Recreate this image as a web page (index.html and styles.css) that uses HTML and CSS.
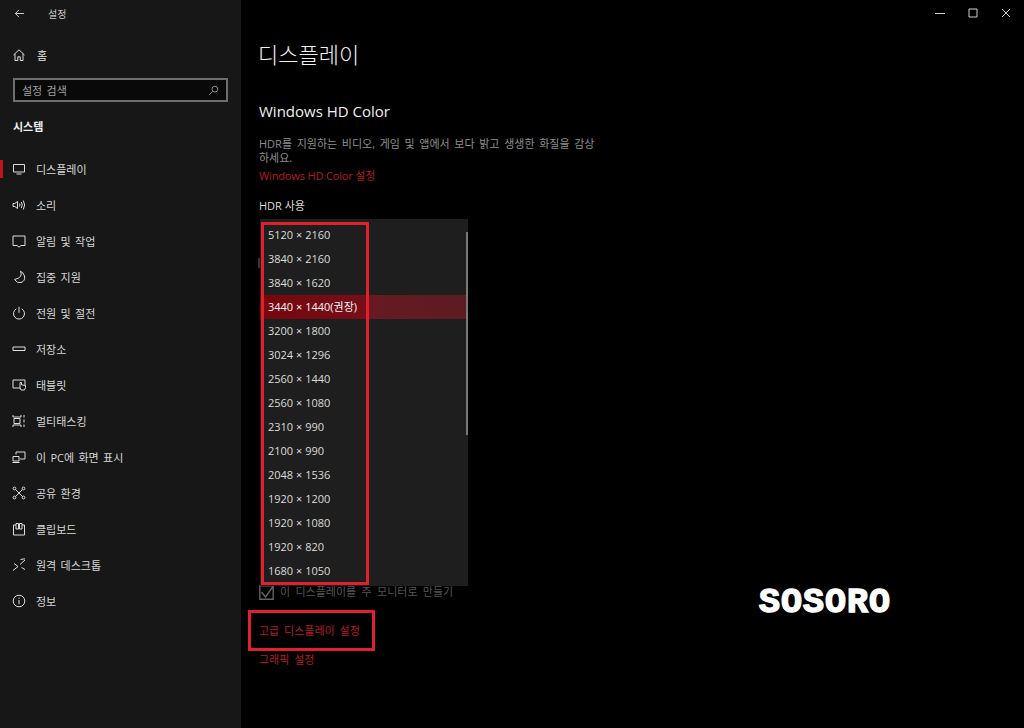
FILE: index.html
```html
<!DOCTYPE html>
<html lang="ko">
<head>
<meta charset="utf-8">
<title>설정</title>
<link rel="stylesheet" href="styles.css">
</head>
<body>
<div class="app">
  <aside class="sidebar">
    <div class="appbar">
      <svg class="back" viewBox="0 0 12 12"><path d="M11 6H1.500M5.500 2 1.500 6l4 4"/></svg>
      <span class="apptitle">설정</span>
    </div>
    <div class="home">
      <svg class="ico" viewBox="0 0 14 14"><path d="M1.500 7 7 1.800 12.500 7M3 5.800V12.500h2.800V8.800h2.400v3.700H11V5.800"/></svg>
      <span>홈</span>
    </div>
    <div class="search"><span>설정 검색</span>
      <svg class="searchico" viewBox="0 0 12 12"><circle cx="7.500" cy="4.500" r="3.200"/><path d="M5.200 6.800 1.200 10.800"/></svg>
    </div>
    <div class="section">시스템</div>
    <nav class="nav">
      <div class="item active"><svg class="ico" viewBox="0 0 14 14"><path d="M1.500 2.500h11v7.500h-11zM4.500 12h5"/></svg><span>디스플레이</span></div>
      <div class="item"><svg class="ico" viewBox="0 0 14 14"><path d="M1 5.500h1.800L5.500 3.500v7L2.800 8.500H1zM7.500 5.500q1 1.500 0 3M9.300 4q1.800 3 0 6M11.300 2.500q2.700 4.500 0 9"/></svg><span>소리</span></div>
      <div class="item"><svg class="ico" viewBox="0 0 14 14"><path d="M1 2h12v9.500H9L7 13.200 5 11.500H1z"/></svg><span>알림 및 작업</span></div>
      <div class="item"><svg class="ico" viewBox="0 0 14 14"><path d="M8.500 1.200Q11.500 7.500 2.500 9.500 5 13.500 9 12.500 13.500 11 12.500 6 11.500 2.500 8.500 1.200z"/></svg><span>집중 지원</span></div>
      <div class="item"><svg class="ico" viewBox="0 0 14 14"><path d="M4.300 2.800a5.500 5.500 0 1 0 5.400 0M7 .8v6"/></svg><span>전원 및 절전</span></div>
      <div class="item"><svg class="ico" viewBox="0 0 14 14"><path d="M1 5h12v3.500H1z"/></svg><span>저장소</span></div>
      <div class="item"><svg class="ico" viewBox="0 0 14 14"><path d="M8 10H1V2h12v5M8 4.500v5l1 2.500h3.500l1-2.500V7.500L9.500 6.800V4.500z"/></svg><span>태블릿</span></div>
      <div class="item"><svg class="ico" viewBox="0 0 14 14"><path d="M1 1v2h8V1M1 13v-2h8v2M2 4.500h6v5H2zM12 1v2.500M12 5.500v3M12 10.500v2.500"/></svg><span>멀티태스킹</span></div>
      <div class="item"><svg class="ico" viewBox="0 0 14 14"><path d="M4 4.500V2h9v7H8M1 6.500h6V11H1zM.5 12.500h7"/></svg><span>이 PC에 화면 표시</span></div>
      <div class="item"><svg class="ico" viewBox="0 0 14 14"><circle cx="2.500" cy="2.500" r="1.400"/><circle cx="11.500" cy="2.500" r="1.400"/><circle cx="2.500" cy="11.500" r="1.400"/><circle cx="11.500" cy="11.500" r="1.400"/><path d="M3.500 3.500l7 7M10.500 3.500l-7 7"/></svg><span>공유 환경</span></div>
      <div class="item"><svg class="ico" viewBox="0 0 14 14"><path d="M4 3H1.500v10h11V3H10M4 1.500h2.500V7H4zM7.500 1.500H10V7H7.500z"/></svg><span>클립보드</span></div>
      <div class="item"><svg class="ico" viewBox="0 0 14 14"><path d="M1 12.500 6 8.500M6 8.500 2 5.500M8 6.500l5-4.500M8.500 1.500 13 .8M9.500 9.500 13 11.500"/></svg><span>원격 데스크톱</span></div>
      <div class="item"><svg class="ico" viewBox="0 0 14 14"><circle cx="7" cy="7" r="5.800"/><path d="M7 6v4.200M7 3.600v1.200"/></svg><span>정보</span></div>
    </nav>
  </aside>
  <main class="main">
    <div class="winbar">
      <svg class="win" viewBox="0 0 10 10"><path d="M0 5.500h10"/></svg>
      <svg class="win" viewBox="0 0 10 10"><path d="M1 1h8v8H1z"/></svg>
      <svg class="win" viewBox="0 0 10 10"><path d="M1 1l8 8M9 1 1 9"/></svg>
    </div>
    <div class="content">
      <h1 class="title">디스플레이</h1>
      <h2 class="subtitle">Windows HD Color</h2>
      <p class="desc">HDR를 지원하는 비디오, 게임 및 앱에서 보다 밝고 생생한 화질을 감상<br>하세요.</p>
      <a class="link hdlink">Windows HD Color 설정</a>
      <div class="label">HDR 사용</div>
      <div class="dropdown">
        <ul class="options">
          <li>5120 × 2160</li>
          <li>3840 × 2160</li>
          <li>3840 × 1620</li>
          <li class="selected">3440 × 1440(권장)</li>
          <li>3200 × 1800</li>
          <li>3024 × 1296</li>
          <li>2560 × 1440</li>
          <li>2560 × 1080</li>
          <li>2310 × 990</li>
          <li>2100 × 990</li>
          <li>2048 × 1536</li>
          <li>1920 × 1200</li>
          <li>1920 × 1080</li>
          <li>1920 × 820</li>
          <li>1680 × 1050</li>
        </ul>
        <div class="scrollbar"></div>
        <div class="redbox listbox"></div>
      </div>
      <label class="check">
        <svg class="checkbox" viewBox="0 0 15 15"><path d="M.8.800h13.400v13.400H.8zM2.500 7l4 5L14 1.500"/></svg>
        <span>이 디스플레이를 주 모니터로 만들기</span>
      </label>
      <div class="advanced">
        <a class="link kor">고급 디스플레이 설정</a>
        <div class="redbox advbox"></div>
      </div>
      <a class="link kor gfx">그래픽 설정</a>
    </div>
    <div class="mark">SOSORO</div>
  </main>
</div>
</body>
</html>
```

FILE: styles.css
```css
* { box-sizing: border-box; }
html, body { margin: 0; height: 100%; }
body {
  background: #000;
  color: #e6e6e6;
  font-family: "Open Sans", "Noto Sans CJK KR", sans-serif;
  font-size: 11px;
  overflow: hidden;
}
.app { display: flex; width: 1024px; height: 728px; }
.sidebar { width: 241px; flex: none; background: #171717; display: flex; flex-direction: column; word-spacing: 1.500px; }
.appbar { display: flex; align-items: center; height: 26px; padding-left: 14px; }
.back { width: 11px; height: 11px; fill: none; stroke: #dcdcdc; stroke-width: 1; }
.apptitle { margin-left: 23px; font-size: 10px; color: #c8c8c8; }
.ico { width: 14px; height: 14px; flex: none; fill: none; stroke: #dedede; stroke-width: 1; }
.home { display: flex; align-items: center; height: 36px; margin-top: 11px; padding-left: 12px; }
.home span { margin-left: 11px; }
.search {
  display: flex; align-items: center; justify-content: space-between;
  height: 24px; margin: 5px 13px 0; padding: 0 7px 0 7px;
  background: #090909; border: 2px solid #6e6e6e; color: #a0a0a0;
}
.searchico { width: 11px; height: 11px; fill: none; stroke: #9a9a9a; stroke-width: 1; }
.section { margin: 15px 0 0 13px; height: 20px; line-height: 20px; font-weight: 700; color: #efefef; }
.nav { margin-top: 14px; display: flex; flex-direction: column; }
.item { position: relative; display: flex; align-items: center; height: 36px; padding-left: 12px; gap: 10px; color: #d8d8d8; }
.item.active::before { content: ""; position: absolute; left: 0; top: 9px; width: 3px; height: 18px; background: #c0141f; }
.main { flex: 1; position: relative; display: flex; flex-direction: column; }
.winbar { display: flex; justify-content: flex-end; align-items: center; gap: 23px; height: 26px; padding-right: 13px; }
.win { width: 10px; height: 10px; fill: none; stroke: #cfcfcf; stroke-width: 1; }
.content { padding-left: 18px; display: flex; flex-direction: column; align-items: flex-start; }
.title { margin: 12px 0 0 -1px; height: 32px; line-height: 32px; font-size: 22px; font-weight: 300; color: #f0f0f0; }
.subtitle { margin: 29px 0 0; height: 24px; line-height: 24px; font-size: 15px; font-weight: 400; color: #f0f0f0; }
.desc { margin: 14px 0 0; line-height: 14px; color: #8e8e8e; word-spacing: 1.800px; }
.link { display: block; color: #b31a28; line-height: 16px; }
.kor { word-spacing: 2px; }
.hdlink { margin-top: 3px; letter-spacing: -0.150px; }
.label { margin-top: 14px; height: 16px; line-height: 16px; color: #dcdcdc; }
.dropdown { position: relative; width: 208px; height: 367px; margin: 5px 0 0 1px; padding-top: 4px; background: #1e1e1e; }
.dropdown::before { content: ""; position: absolute; left: -2px; top: 39px; width: 2px; height: 10px; background: #333; }
.options { list-style: none; margin: 0; padding: 0; }
.options li { height: 24px; line-height: 24px; padding-left: 8px; color: #dcdcdc; }
.options .selected { background: linear-gradient(90deg, #76060e, #760e18 50%, #671a22 55%, #5c1c22); color: #f4f4f4; }
.scrollbar { position: absolute; right: 0; top: 13px; width: 2px; height: 203px; background: #777; }
.redbox { position: absolute; border: 3px solid #e0202c; }
.listbox { left: 1px; top: 3px; width: 108px; height: 363px; }
.check { display: flex; align-items: center; gap: 6px; height: 16px; margin-top: -2px; color: #555; line-height: 16px; word-spacing: 2.500px; }
.checkbox { width: 15px; height: 15px; fill: none; stroke: #626262; stroke-width: 1.400; }
.advanced { position: relative; margin-top: 23px; }
.advbox { left: -11px; top: -13px; width: 127px; height: 41px; }
.gfx { margin-top: 13px; }
.mark {
  position: absolute; left: 518px; top: 585px;
  font-family: "Liberation Mono", monospace; font-weight: 700; font-size: 35px; line-height: 36px;
  letter-spacing: 1px; color: #fff; -webkit-text-stroke: 1.500px #fff;
}
```
